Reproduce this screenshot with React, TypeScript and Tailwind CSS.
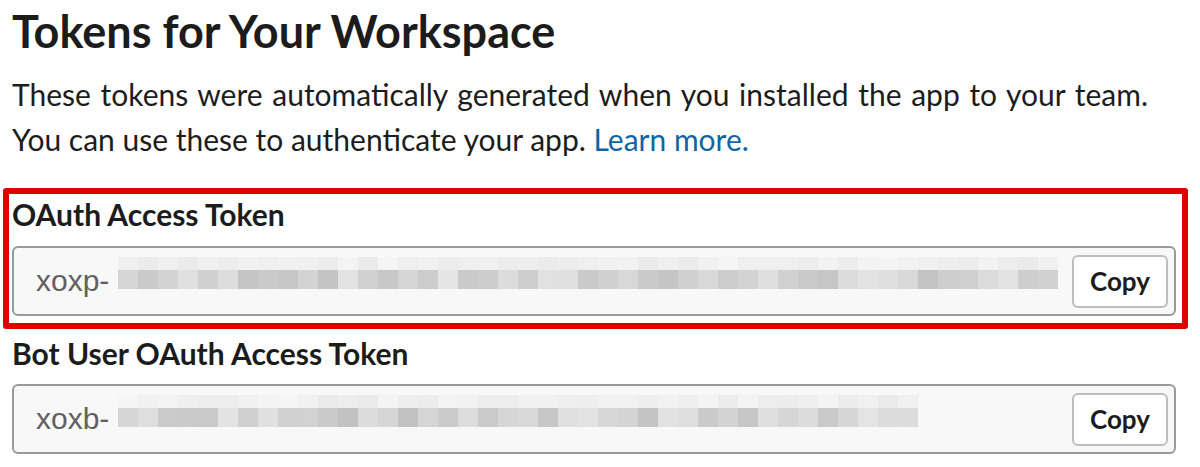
import React from "react";

function seeded(n: number) {
  let s = n;
  return () => {
    s = (s * 9301 + 49297) % 233280;
    return s / 233280;
  };
}

function Blur({ width, seed }: { width: number; seed: number }) {
  const rnd = seeded(seed);
  const cols = Math.floor(width / 20);
  const rects: React.ReactNode[] = [];
  for (let i = 0; i < cols; i++) {
    const t = Math.round(234 + rnd() * 11);
    const b = Math.round(194 + rnd() * 34);
    rects.push(
      <rect key={"t" + i} x={i * 20} y={0} width={20} height={13} fill={`rgb(${t},${t},${t})`} />
    );
    rects.push(
      <rect key={"b" + i} x={i * 20} y={13} width={20} height={19} fill={`rgb(${b},${b},${b})`} />
    );
  }
  return (
    <svg width={cols * 20} height={32} className="block shrink-0">
      {rects}
    </svg>
  );
}

function TokenField({ prefix, blurWidth, seed }: { prefix: string; blurWidth: number; seed: number }) {
  return (
    <div className="flex h-[70px] w-[1164px] items-center overflow-hidden rounded-[6px] border-2 border-[#9a9a9a] bg-[#f8f8f8] pl-[22px] pr-[6px]">
      <span
        className="shrink-0 text-[30px] leading-none text-[#616061]"
        style={{ fontFamily: '"Liberation Sans", Arial, sans-serif' }}
      >
        {prefix}
      </span>
      <div className="ml-[9px] flex-1 self-start overflow-hidden pt-[9px]">
        <Blur width={blurWidth} seed={seed} />
      </div>
      <button className="ml-2 flex h-[53px] w-[96px] shrink-0 items-center justify-center rounded-[6px] border-2 border-[#bdbdbd] bg-white text-[26px] font-bold text-[#1d1c1d]">
        Copy
      </button>
    </div>
  );
}

export default function App() {
  return (
    <div
      className="h-[467px] w-[1200px] overflow-hidden bg-white text-[#1d1c1d]"
      style={{ fontFamily: 'Lato, "Noto Sans", sans-serif' }}
    >
      <div className="pl-[12px] pt-[4px]">
        <h1 className="text-[45px] font-bold leading-[54px]">Tokens for Your Workspace</h1>
        <p className="mt-[14px] text-[30px] leading-[45px]">
          <span className="[word-spacing:2px]">
            These tokens were automatically generated when you installed the app to your team.
          </span>
          <br />
          You can use these to authenticate your app.{" "}
          <a className="text-[#1264a3]">Learn more.</a>
        </p>
      </div>
      <div className="ml-[3px] mt-[26px] w-[1185px] rounded-[3px] border-[6px] border-[#e00000] pb-[7px] pl-[3px] pr-[6px] pt-[2px]">
        <div className="text-[30px] font-bold leading-[36px]">OAuth Access Token</div>
        <div className="mt-[14px]">
          <TokenField prefix="xoxp-" blurWidth={950} seed={7} />
        </div>
      </div>
      <div className="pl-[12px] pt-[6px]">
        <div className="text-[30px] font-bold leading-[36px]">Bot User OAuth Access Token</div>
        <div className="mt-[13px]">
          <TokenField prefix="xoxb-" blurWidth={800} seed={19} />
        </div>
      </div>
    </div>
  );
}
